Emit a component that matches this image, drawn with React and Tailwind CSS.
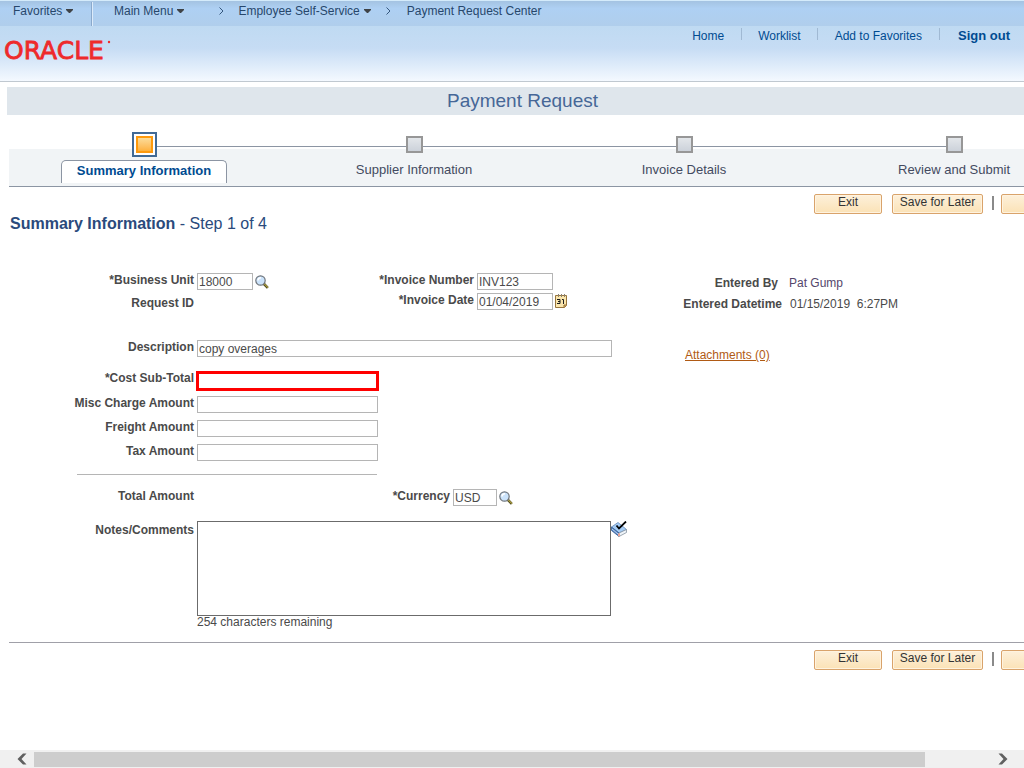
import React, { useState } from "react";

const STEPS = ["Summary Information", "Supplier Information", "Invoice Details", "Review and Submit"];

const CaretDown = () => (
  <svg width="7" height="4" viewBox="0 0 7 4" className="ml-1 mt-px" aria-hidden="true">
    <path d="M0 0h7v1L4 4H3L0 1z" fill="#3f4347" />
  </svg>
);

const Crumb = () => (
  <svg width="5" height="8" viewBox="0 0 5 8" fill="none" aria-hidden="true">
    <path d="M0.5 0.5L4 4L0.5 7.5" stroke="#35577d" />
  </svg>
);

const LookupIcon = () => (
  <svg width="14" height="14" viewBox="0 0 14 14" aria-hidden="true">
    <path d="M8.5 8.5L12.8 12.8" stroke="#4d4a1c" strokeWidth="2.6" />
    <path d="M9 8.6L13 12.6" stroke="#b5a545" strokeWidth="1.1" />
    <circle cx="5.5" cy="5.5" r="4.7" fill="#cbe3fb" stroke="#70757c" strokeWidth="1.2" />
    <path d="M3 5.5a3 3 0 0 1 3-2.8" stroke="#fff" strokeWidth="1.6" fill="none" />
  </svg>
);

const CalendarIcon = () => (
  <svg width="12" height="14" viewBox="0 0 12 14" aria-hidden="true">
    <path d="M0.5 1.5h11v10l-2 2h-9z" fill="#fbe6ac" stroke="#98753c" />
    <path d="M11.5 11h-2.5v2.5" fill="#d6a95a" stroke="#98753c" />
    <path d="M3.5 0v3M6.5 0v3M9.5 0v3" stroke="#8b8272" />
    <path d="M2 5.5h3v4H2M3 7.5h2M7 5.5h1.5v4.5" stroke="#1b1b1b" fill="none" />
  </svg>
);

const SpellCheckIcon = () => (
  <svg width="16" height="16" viewBox="0 0 16 16" aria-hidden="true">
    <path d="M0.5 6L7 1.5L15.5 8.5L8 12z" fill="#a5ccf5" stroke="#6288b8" strokeWidth="0.8" />
    <path d="M0.5 6L8 12V15.5L0.5 9.5z" fill="#4a7cc4" stroke="#38608f" strokeWidth="0.8" />
    <path d="M8 12L15.5 8.5V11.5L8 15.5z" fill="#eef3f8" stroke="#8793a0" strokeWidth="0.8" />
    <path d="M1 8L8 13.8" stroke="#e5edf6" strokeWidth="0.8" />
    <path d="M7 12.6h2v2.6H7z" fill="#eca79a" />
    <path d="M5.5 4.5L8 7.5L15 0.5" stroke="#000" strokeWidth="1.8" fill="none" />
  </svg>
);

const Label = ({ htmlFor, className = "", children }) => (
  <label htmlFor={htmlFor} className={`shrink-0 text-right font-bold leading-[15px] ${className}`}>
    {children}
  </label>
);

const TextField = ({ id, value, onChange, className = "" }) => (
  <input
    id={id}
    name={id}
    type="text"
    value={value}
    onChange={onChange}
    className={`h-[17px] border border-[#b5b5b5] bg-white px-px leading-[15px] outline-none focus:border-[#5b87b8] ${className}`}
  />
);

const FormButton = ({ className = "", children, ...rest }) => (
  <button
    type="button"
    className={`h-5 shrink-0 rounded-xs border border-[#d9a36b] bg-linear-to-b from-[#fdf0da] to-[#fbe2b6] pb-[3px] leading-[15px] text-[#333] shadow-[inset_0_0_0_1px_#fff3df] ${className}`}
    {...rest}
  >
    {children}
  </button>
);

const ButtonBar = () => (
  <div className="-mr-[45px] flex justify-end">
    <FormButton className="w-[68px]">Exit</FormButton>
    <FormButton className="ml-[10px] w-[91px]">Save for Later</FormButton>
    <span className="ml-[9px] mr-[7px] mt-[2px] h-[14px] w-[2px] bg-[#8a8a8a]" />
    <FormButton className="w-[68px]" aria-label="Next" />
  </div>
);

const Header = () => (
  <header>
    <nav className="flex h-[26px] items-start border-t border-[#d4ebfb] bg-linear-to-b from-[#a4c3e2] via-[#aed0f3] via-30% to-[#b0ceec] text-[#27476b]">
      <a href="#favorites" className="flex h-6 w-[91px] items-center pb-[5px] pl-[13px]">
        Favorites
        <CaretDown />
      </a>
      <span className="mt-px h-6 w-[2px] border-l border-r border-l-[#8aa9cc] border-r-[#dcebfa]" />
      <a href="#menu" className="flex h-6 items-center pb-[5px] pl-[21px]">
        Main Menu
        <CaretDown />
      </a>
      <span className="flex h-6 w-[54px] items-center justify-center pb-1 pl-5">
        <Crumb />
      </span>
      <a href="#self-service" className="flex h-6 items-center pb-[5px]">
        Employee Self-Service
        <CaretDown />
      </a>
      <span className="flex h-6 w-9 items-center justify-center pb-1">
        <Crumb />
      </span>
      <a href="#center" className="flex h-6 items-center pb-[5px]">
        Payment Request Center
      </a>
    </nav>
    <div className="flex h-14 items-start justify-between border-b border-[#c0c8d0] bg-linear-to-b from-[#bfdaf2] via-[#c6dcf4] via-40% to-[#f4f9ff] text-[#004b91]">
      <svg width="116" height="36" viewBox="0 0 116 36" className="ml-1 mt-2" role="img" aria-label="Oracle">
        <text x="0" y="25" fontFamily="DejaVu Sans, sans-serif" fontSize="25" fill="#ee2a2b" stroke="#ee2a2b" strokeWidth="0.8">
          ORACLE
        </text>
        <circle cx="105" cy="8" r="1.2" fill="#ee2a2b" />
      </svg>
      <nav className="flex items-start pr-[14px] pt-[2px] leading-4">
        <a href="#home" className="px-[17px]">Home</a>
        <span className="h-3 w-px bg-[#a0b9d3]" />
        <a href="#worklist" className="px-4">Worklist</a>
        <span className="h-3 w-px bg-[#a0b9d3]" />
        <a href="#add" className="px-[17px]">Add to Favorites</a>
        <span className="h-3 w-px bg-[#a0b9d3]" />
        <a href="#signout" className="pl-[18px] text-[13px] font-bold">Sign out</a>
      </nav>
    </div>
  </header>
);

const StepTrain = ({ current }) => (
  <ol className="ml-[9px] -mr-[65px] grid grid-cols-4 border-b border-[#8c95a3] bg-[linear-gradient(to_bottom,#fff_17px,#f1f4f6_17px)] pb-[3px] text-[13px]">
    {STEPS.map((step, i) => (
      <li key={step} className="flex flex-col items-center">
        <div className="flex h-[25px] w-full items-center">
          <span className={i === 0 ? "flex-1" : "mt-[3px] h-px flex-1 bg-[#8c95a3]"} />
          {i === current ? (
            <span className="size-[25px] border-2 border-[#416a95] bg-white p-[2px]">
              <span className="block size-full border-2 border-[#fe9a0c] bg-linear-to-b from-[#fbdc98] to-[#fdb13c]" />
            </span>
          ) : (
            <span className="size-[17px] border-2 border-[#979797] bg-linear-to-b from-[#e3e6ea] to-[#ccd2da]" />
          )}
          <span className={i === STEPS.length - 1 ? "flex-1" : "mt-[3px] h-px flex-1 bg-[#8c95a3]"} />
        </div>
        {i === current ? (
          <span className="mt-[3px] h-[23px] rounded-t-[5px] border border-b-0 border-[#8c95a3] bg-white px-[15px] font-bold leading-5 text-[#004b91]">
            {step}
          </span>
        ) : (
          <span className="mt-[3px] leading-5 text-[#434a5f]">{step}</span>
        )}
      </li>
    ))}
  </ol>
);

const App = () => {
  const [form, setForm] = useState({
    unit: "18000",
    invoice: "INV123",
    date: "01/04/2019",
    description: "copy overages",
    subTotal: "",
    misc: "",
    freight: "",
    tax: "",
    currency: "USD",
    notes: "",
  });

  const update = (e) => setForm({ ...form, [e.target.name]: e.target.value });

  return (
    <div className="flex min-h-screen flex-col overflow-hidden bg-white font-['Liberation_Sans',Arial,sans-serif] text-[12px] text-[#4a4a4a]">
      <Header />

      <main className="flex-1">
        <h1 className="ml-[7px] mt-[5px] h-7 bg-[#dfe6ec] pl-[14px] text-center text-[19px] leading-7 text-[#466797]">
          Payment Request
        </h1>

        <div className="mt-[17px]">
          <StepTrain current={0} />
        </div>

        <div className="mt-[7px]">
          <ButtonBar />
        </div>

        <h2 className="ml-[10px] text-[16px] leading-5 text-[#2a4a7c]">
          <b>Summary Information</b> - Step 1 of 4
        </h2>

        <form className="ml-[9px] mt-[39px]">
          <div className="flex">
            <div>
              <div className="flex">
                <div className="flex w-[369px] flex-col gap-[5px]">
                  <div className="flex">
                    <Label htmlFor="unit" className="mr-[3px] w-[185px]">*Business Unit</Label>
                    <TextField id="unit" value={form.unit} onChange={update} className="w-14" />
                    <button type="button" aria-label="Look up business unit" className="ml-[2px] mt-[2px] size-[14px]">
                      <LookupIcon />
                    </button>
                  </div>
                  <span className="w-[185px] text-right font-bold leading-[17px]">Request ID</span>
                </div>
                <div className="flex flex-col gap-[3px]">
                  <div className="flex">
                    <Label htmlFor="invoice" className="mr-[3px] w-24">*Invoice Number</Label>
                    <TextField id="invoice" value={form.invoice} onChange={update} className="w-[76px]" />
                  </div>
                  <div className="flex">
                    <Label htmlFor="date" className="mr-[3px] w-24">*Invoice Date</Label>
                    <TextField id="date" value={form.date} onChange={update} className="w-[76px]" />
                    <button type="button" aria-label="Choose a date" className="ml-[2px] mt-px h-[14px] w-3">
                      <CalendarIcon />
                    </button>
                  </div>
                </div>
              </div>
              <div className="mt-7 flex">
                <Label htmlFor="description" className="mr-[3px] w-[185px]">Description</Label>
                <TextField id="description" value={form.description} onChange={update} className="w-[415px]" />
              </div>
            </div>

            <div className="ml-[71px] pt-[2px] leading-[17px]">
              <dl className="flex flex-col gap-1">
                <div className="flex">
                  <dt className="w-[95px] text-right font-bold">Entered By</dt>
                  <dd className="ml-[11px] text-[#54466b]">Pat Gump</dd>
                </div>
                <div className="flex">
                  <dt className="w-[99px] text-right font-bold">Entered Datetime</dt>
                  <dd className="ml-2 whitespace-pre">01/15/2019  6:27PM</dd>
                </div>
              </dl>
              <a href="#attachments" className="ml-[2px] mt-[34px] inline-block text-[#b05a14] underline">
                Attachments (0)
              </a>
            </div>
          </div>

          <div className="mt-[7px] flex flex-col gap-[7px]">
            <div className="-mb-[2px] flex items-start">
              <Label htmlFor="subTotal" className="mr-[2px] w-[185px]">*Cost Sub-Total</Label>
              <input
                id="subTotal"
                name="subTotal"
                type="text"
                value={form.subTotal}
                onChange={update}
                className="h-5 w-[183px] border-3 border-[#ff0000] px-px outline-none"
              />
            </div>
            <div className="flex">
              <Label htmlFor="misc" className="mr-[3px] w-[185px]">Misc Charge Amount</Label>
              <TextField id="misc" value={form.misc} onChange={update} className="w-[181px]" />
            </div>
            <div className="flex">
              <Label htmlFor="freight" className="mr-[3px] w-[185px]">Freight Amount</Label>
              <TextField id="freight" value={form.freight} onChange={update} className="w-[181px]" />
            </div>
            <div className="flex">
              <Label htmlFor="tax" className="mr-[3px] w-[185px]">Tax Amount</Label>
              <TextField id="tax" value={form.tax} onChange={update} className="w-[181px]" />
            </div>
          </div>

          <hr className="ml-[68px] mt-[13px] w-[300px] border-t border-[#b5b5b5]" />

          <div className="mt-[14px] flex">
            <span className="w-[185px] text-right font-bold leading-[15px]">Total Amount</span>
            <Label htmlFor="currency" className="mr-[3px] w-64">*Currency</Label>
            <TextField id="currency" value={form.currency} onChange={update} className="w-11" />
            <button type="button" aria-label="Look up currency" className="ml-[2px] mt-[2px] size-[14px]">
              <LookupIcon />
            </button>
          </div>

          <div className="mt-[15px] flex items-start">
            <Label htmlFor="notes" className="mr-[3px] w-[185px] pt-[2px]">Notes/Comments</Label>
            <div>
              <textarea
                id="notes"
                name="notes"
                maxLength={254}
                value={form.notes}
                onChange={update}
                className="block h-[95px] w-[414px] resize-none border border-[#6b6b6b] p-px outline-none"
              />
              <p className="leading-3">{254 - form.notes.length} characters remaining</p>
            </div>
            <button type="button" aria-label="Check spelling" className="size-4">
              <SpellCheckIcon />
            </button>
          </div>
        </form>

        <hr className="ml-[9px] mt-[14px] border-t border-[#a0a0a8]" />
        <div className="mt-[7px]">
          <ButtonBar />
        </div>
      </main>

      <footer className="flex h-[18px] items-center bg-[#f0f0f0]">
        <button type="button" aria-label="Scroll left" className="flex w-[34px] justify-center pl-[10px]">
          <svg width="10" height="12" viewBox="0 0 10 12" aria-hidden="true">
            <path d="M6 0.5h3.5L4.5 6l5 5.5H6L0.5 6z" fill="#606060" />
          </svg>
        </button>
        <div className="flex h-[15px] flex-1">
          <div className="w-[94%] bg-[#cdcdcd]" />
        </div>
        <button type="button" aria-label="Scroll right" className="flex w-[42px] justify-center">
          <svg width="10" height="12" viewBox="0 0 10 12" aria-hidden="true">
            <path d="M4 0.5H0.5L5.5 6l-5 5.5H4L9.5 6z" fill="#606060" />
          </svg>
        </button>
      </footer>
    </div>
  );
};

export default App;
